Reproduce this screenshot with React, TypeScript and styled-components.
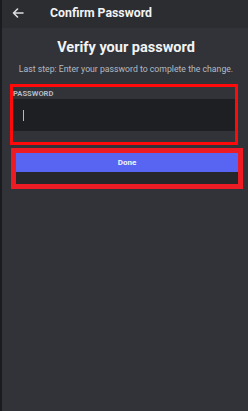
import styled, { createGlobalStyle } from "styled-components";

const GlobalStyle = createGlobalStyle`
  html, body {
    margin: 0;
    padding: 0;
    background: #313338;
  }
  * {
    box-sizing: border-box;
  }
`;

const Screen = styled.div`
  width: 248px;
  height: 411px;
  display: flex;
  flex-direction: column;
  background: #313338;
  border-left: 2px solid #1a1b1e;
  font-family: Roboto, "Noto Sans", sans-serif;
  color: #f2f3f5;
  overflow: hidden;
`;

const Header = styled.div`
  height: 28px;
  display: flex;
  align-items: center;
  padding: 0 0 2px 10px;
  gap: 26px;
  background: #2b2d31;
`;

const BackButton = styled.span`
  display: flex;
  align-items: center;
  color: #dbdee1;
`;

const HeaderTitle = styled.div`
  font-size: 12.3px;
  font-weight: 700;
`;

const Body = styled.div`
  display: flex;
  flex-direction: column;
  padding: 10px 0 0 8px;
`;

const Heading = styled.h1`
  margin: 0;
  text-align: center;
  font-size: 14.5px;
  font-weight: 700;
  line-height: 20px;
  padding-right: 6px;
`;

const Subtitle = styled.p`
  margin: 5px 0 0;
  text-align: center;
  font-size: 8.7px;
  line-height: 12px;
  color: #b5bac1;
  padding-right: 6px;
`;

const FieldFrame = styled.div`
  margin-top: 9px;
  width: 228px;
  height: 61px;
  border: 3px solid #ff0a0a;
  display: flex;
  flex-direction: column;
`;

const Label = styled.label`
  font-size: 7.6px;
  font-weight: 700;
  color: #b5bac1;
  padding-top: 2px;
  height: 12px;
`;

const Input = styled.div`
  height: 32px;
  background: #1e1f22;
  display: flex;
  align-items: center;
  padding-left: 10px;
`;

const Caret = styled.span`
  width: 1px;
  height: 11px;
  background: #b5bac1;
`;

const ButtonFrame = styled.div`
  margin: 3px 0 0 1px;
  width: 232px;
  height: 41px;
  border: 5px solid #ed1c24;
  display: flex;
  flex-direction: column;
  background: #26272b;
`;

const DoneButton = styled.button`
  height: 19px;
  border: none;
  margin: 0;
  background: #5865f2;
  color: #f2f3f5;
  font-family: Roboto, "Noto Sans", sans-serif;
  font-size: 8px;
  font-weight: 700;
  padding: 0 0 1px;
`;

export default function App() {
  return (
    <>
      <GlobalStyle />
      <Screen>
        <Header>
          <BackButton>
            <svg width="12" height="10" viewBox="0 0 12 10" fill="none">
              <path
                d="M11 5H1.5M5.5 1 1.5 5l4 4"
                stroke="currentColor"
                strokeWidth="1.6"
                strokeLinecap="round"
                strokeLinejoin="round"
              />
            </svg>
          </BackButton>
          <HeaderTitle>Confirm Password</HeaderTitle>
        </Header>
        <Body>
          <Heading>Verify your password</Heading>
          <Subtitle>Last step: Enter your password to complete the change.</Subtitle>
          <FieldFrame>
            <Label>PASSWORD</Label>
            <Input>
              <Caret />
            </Input>
          </FieldFrame>
          <ButtonFrame>
            <DoneButton>Done</DoneButton>
          </ButtonFrame>
        </Body>
      </Screen>
    </>
  );
}
